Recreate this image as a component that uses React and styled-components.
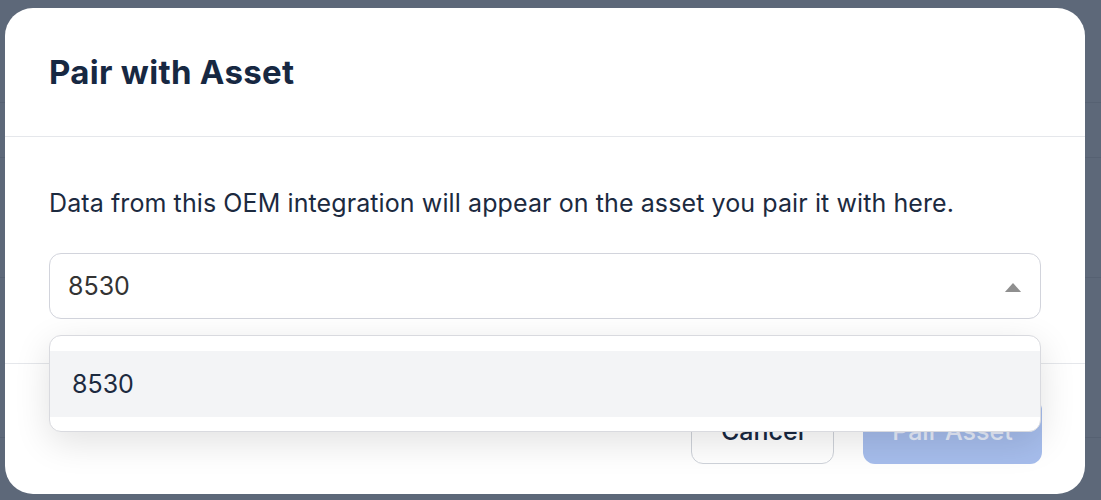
import React from 'react'
import styled, { createGlobalStyle } from 'styled-components'

const GlobalStyle = createGlobalStyle`
    * { box-sizing: border-box; }
    html, body {
        margin: 0;
        padding: 0;
        width: 100%;
        height: 100%;
        overflow: hidden;
        font-family: Inter, "Noto Sans", sans-serif;
    }
`

const rows = [103, 55, 120, 160, 80]

const App = () => {
    return (
        <>
            <GlobalStyle />
            <Page>
                {rows.map((h, i) => (
                    <BgRow key={i} h={h} />
                ))}
                <BgLastRow>
                    <BgCell w={139} />
                    <BgCell w={344} />
                    <BgDate>Jan 6, 2025</BgDate>
                </BgLastRow>
            </Page>

            <Modal>
                <Header>
                    <Title>Pair with Asset</Title>
                </Header>
                <Body>
                    <Description>
                        Data from this OEM integration will appear on the asset you pair it with here.
                    </Description>
                    <SelectWrap>
                        <Select>
                            <SelectValue>8530</SelectValue>
                            <Caret viewBox="0 0 18 10">
                                <path d="M0 10 L9 0 L18 10 Z" fill="#8f8f8f" />
                            </Caret>
                        </Select>
                        <Menu>
                            <Option active>8530</Option>
                        </Menu>
                    </SelectWrap>
                </Body>
                <Footer>
                    <CancelBtn>Cancel</CancelBtn>
                    <PrimaryBtn disabled>Pair Asset</PrimaryBtn>
                </Footer>
            </Modal>
        </>
    )
}

export default App

const Page = styled.div`
    width: 100vw;
    height: 100vh;
    background: #5d6879;
    display: flex;
    flex-direction: column;
`

const BgRow = styled.div`
    height: ${props => props.h}px;
    border-bottom: 1px solid #566172;
    flex-shrink: 0;
`

const BgLastRow = styled.div`
    display: flex;
    flex: 1;
    align-items: flex-end;
`

const BgCell = styled.div`
    width: ${props => props.w}px;
    height: 100%;
    border-right: 1px solid #566172;
`

const BgDate = styled.div`
    margin-left: 407px;
    margin-bottom: -18px;
    font-size: 24px;
    line-height: 24px;
    color: #1f2937;
`

const Modal = styled.div`
    position: fixed;
    left: 5px;
    top: 8px;
    width: 1080px;
    height: 486px;
    background: #ffffff;
    border-radius: 28px;
    display: flex;
    flex-direction: column;
`

const Header = styled.div`
    height: 129px;
    padding: 0 44px;
    display: flex;
    align-items: center;
    border-bottom: 1px solid #e5e7eb;
`

const Title = styled.h2`
    margin: 0;
    font-size: 33px;
    font-weight: 700;
    color: #172842;
    letter-spacing: 0.3px;
`

const Body = styled.div`
    padding: 51px 44px 44px 44px;
    border-bottom: 1px solid #e5e7eb;
`

const Description = styled.p`
    margin: 0;
    font-size: 25px;
    line-height: 30px;
    letter-spacing: 0.1px;
    color: #1c2a3f;
`

const SelectWrap = styled.div`
    position: relative;
    margin-top: 35px;
`

const Select = styled.div`
    height: 66px;
    border: 1px solid #d2d4dc;
    border-radius: 12px;
    display: flex;
    align-items: center;
    justify-content: space-between;
    padding: 0 18px 0 18px;
`

const SelectValue = styled.span`
    font-size: 25px;
    color: #333333;
`

const Caret = styled.svg`
    width: 18px;
    height: 9px;
    margin-top: 2px;
`

const Menu = styled.div`
    position: absolute;
    left: 0;
    right: 0;
    top: 82px;
    padding: 15px 0 14px 0;
    background: #ffffff;
    border: 1px solid #d9dadf;
    border-radius: 12px;
    box-shadow: 0 10px 36px rgba(0, 0, 0, 0.12);
    z-index: 2;
`

const Option = styled.div`
    height: 66px;
    display: flex;
    align-items: center;
    padding: 0 22px;
    font-size: 25px;
    color: #1c2a3f;
    background: ${props => (props.active ? '#f3f4f6' : 'transparent')};
`

const Footer = styled.div`
    flex: 1;
    display: flex;
    justify-content: flex-end;
    align-items: flex-end;
    gap: 29px;
    padding: 0 43px 30px 0;
`

const BaseBtn = styled.button`
    height: 66px;
    border-radius: 12px;
    font-family: Inter, "Noto Sans", sans-serif;
    font-size: 25px;
    font-weight: 500;
    cursor: pointer;
`

const CancelBtn = styled(BaseBtn)`
    width: 143px;
    background: #ffffff;
    border: 1px solid #cfd3da;
    color: #172842;
`

const PrimaryBtn = styled(BaseBtn)`
    width: 179px;
    background: #a6bdec;
    border: none;
    color: #e6ecfa;
`
